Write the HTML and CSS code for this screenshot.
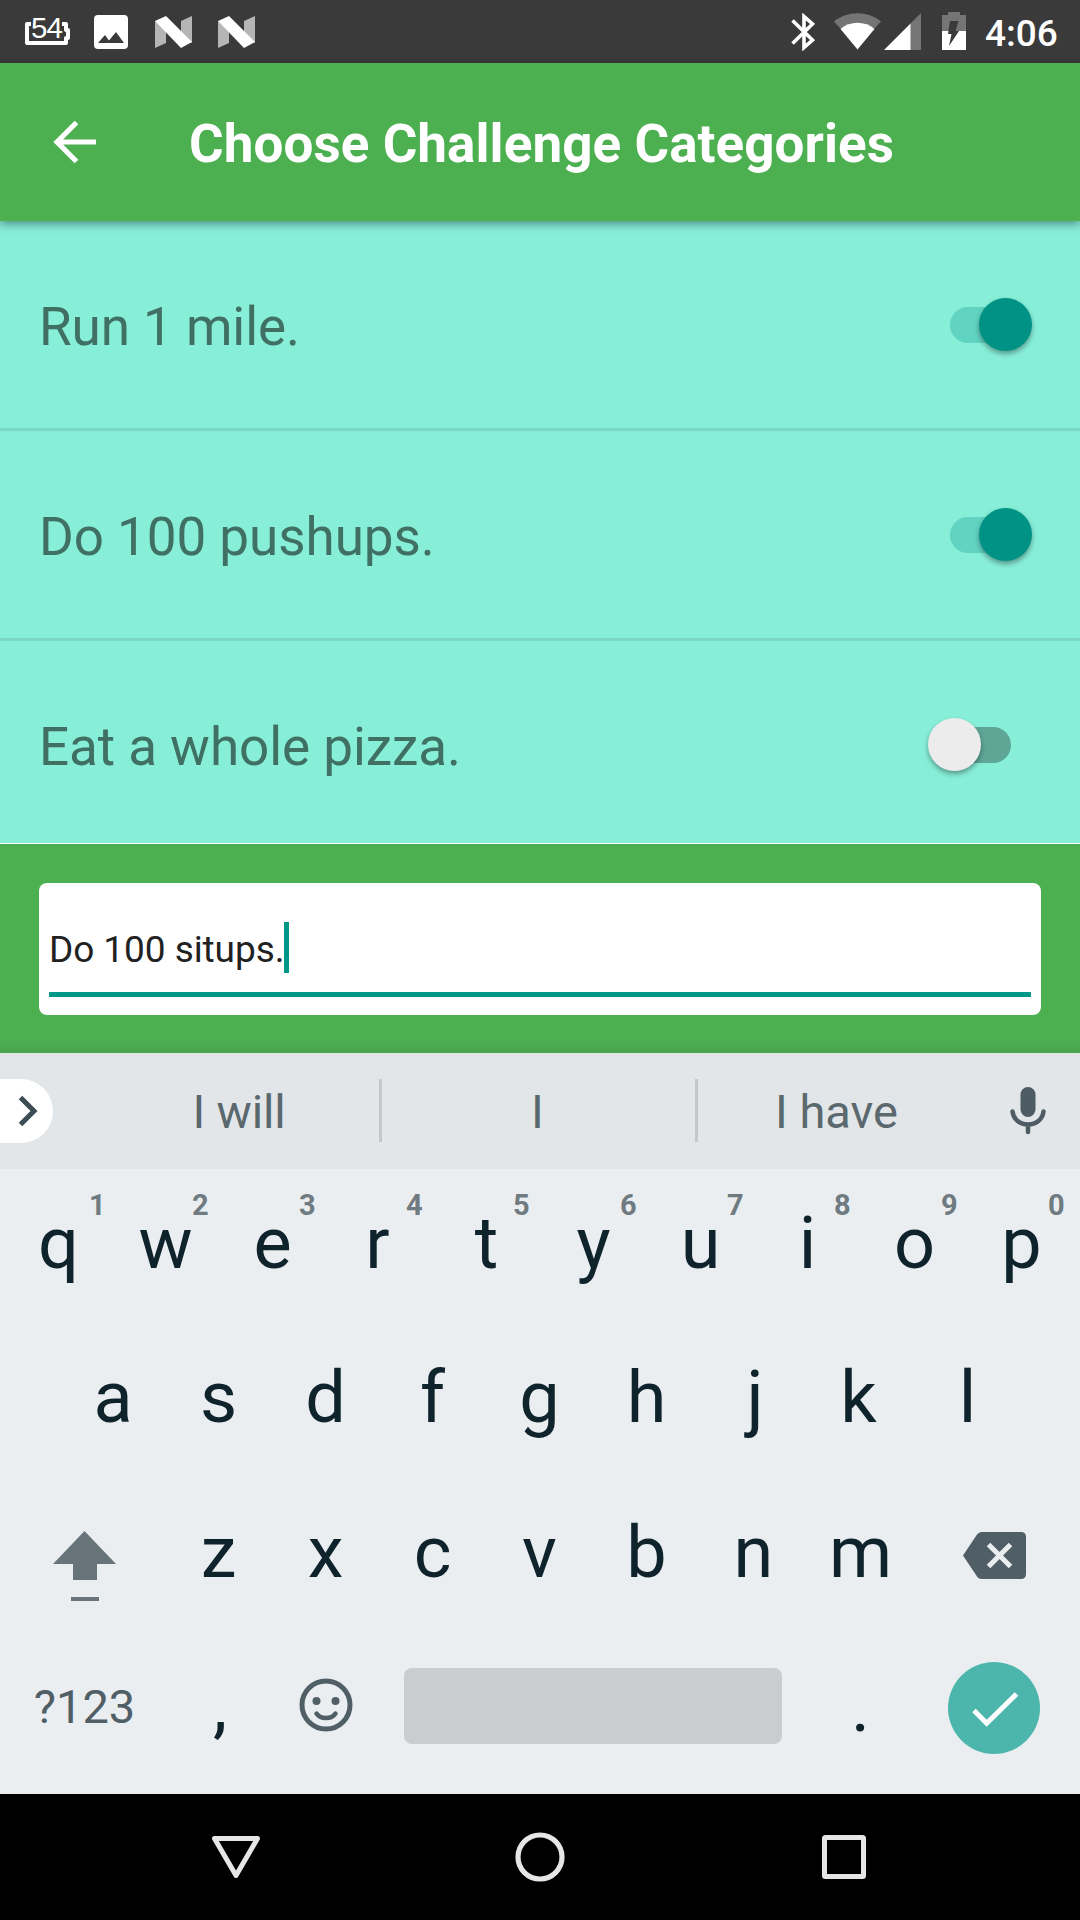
FILE: index.html
```html
<!DOCTYPE html>
<html lang="en">
<head>
<meta charset="utf-8">
<title>Choose Challenge Categories</title>
<link rel="stylesheet" href="styles.css">
</head>
<body>
<div class="screen">
  <header class="status">
    <div class="battery-level">
      <svg width="46" height="24" viewBox="0 0 46 24"><path d="M6 2H2v19h39v-5h2V8h-2V2h-4" fill="none" stroke="#fff" stroke-width="4" stroke-linejoin="round"/></svg>
      <span class="battery-text">54</span>
    </div>
    <svg class="picture" width="34" height="34" viewBox="0 0 34 34"><path fill="#fff" fill-rule="evenodd" d="M4 0h26a4 4 0 0 1 4 4v26a4 4 0 0 1-4 4H4a4 4 0 0 1-4-4V4a4 4 0 0 1 4-4zm0 28h26l-8-11-7 8.500-4-5.500z"/></svg>
    <svg class="nougat" width="39" height="32" viewBox="0 0 39 32"><path fill="#b5b5b5" d="M1 5v27l11-5V12zM27 5l11-5v27l-11-7z"/><path fill="#fff" d="M1 5 12 0l26 26-11 6z"/></svg>
    <svg class="nougat" width="39" height="32" viewBox="0 0 39 32"><path fill="#b5b5b5" d="M1 5v27l11-5V12zM27 5l11-5v27l-11-7z"/><path fill="#fff" d="M1 5 12 0l26 26-11 6z"/></svg>
    <svg class="bluetooth" width="24" height="38" viewBox="0 0 24 38"><path d="m1.500 7.500 20 19.500-8.500 7.500v-31l8.500 7.500-20 19.500" fill="none" stroke="#fff" stroke-width="3.600"/></svg>
    <svg class="wifi" width="47" height="37" viewBox="0 0 47 37"><path fill="#757575" d="M0 8.500C13-2.500 34-2.500 47 8.500L40 16H7z"/><path fill="#fff" d="M6.500 16C16 7.500 31 7.500 40.500 16L23.500 36.500z"/></svg>
    <svg class="signal" width="37" height="37" viewBox="0 0 37 37"><path fill="#757575" d="M37 0v37H26V11z"/><path fill="#fff" d="M26.500 10.500V37H0z"/></svg>
    <svg class="charging" width="24" height="38" viewBox="0 0 24 38"><path fill="#757575" d="M0 3h6V0h12v3h6v17H0z"/><path fill="#fff" d="M0 19h24v19H0z"/><path fill="#3a3a3a" d="M8 9h8.500l-3 10H17L7 34l2.500-12H6z"/></svg>
    <span class="clock">4:06</span>
  </header>

  <div class="appbar">
    <svg width="44" height="44" viewBox="0 0 44 44"><path d="M43 22H4.500M23.500 2.500 4 22l19.500 19.500" fill="none" stroke="#fff" stroke-width="5.200"/></svg>
    <h1>Choose Challenge Categories</h1>
  </div>

  <main class="list">
    <div class="item"><span class="label">Run 1 mile.</span><span class="switch on"><i class="thumb"></i></span></div>
    <div class="item"><span class="label">Do 100 pushups.</span><span class="switch on"><i class="thumb"></i></span></div>
    <div class="item"><span class="label">Eat a whole pizza.</span><span class="switch off"><i class="thumb"></i></span></div>
  </main>

  <section class="entry">
    <div class="field"><div class="line"><span class="typed">Do 100 situps.</span><i class="caret"></i></div></div>
  </section>

  <section class="suggestions">
    <span class="expand"><svg width="20" height="32" viewBox="0 0 20 32"><path d="m2.500 2.500 13.500 13.500L2.500 29.500" fill="none" stroke="#3c4d56" stroke-width="5"/></svg></span>
    <span class="word first">I will</span>
    <span class="word middle">I</span>
    <span class="word last">I have</span>
    <svg class="mic" width="36" height="48" viewBox="0 0 36 48"><rect x="10.500" y="0" width="15" height="30" rx="7.500" fill="#4d5c63"/><path d="M2.500 24.500c1 8 7.500 13 15.500 13s14.500-5 15.500-13M18 38v7" fill="none" stroke="#4d5c63" stroke-width="4.500" stroke-linecap="round"/></svg>
  </section>

  <section class="keyboard">
    <div class="keys top">
      <span>q<b class="one">1</b></span><span>w<b>2</b></span><span>e<b>3</b></span><span class="pull">r<b>4</b></span><span>t<b>5</b></span><span>y<b>6</b></span><span>u<b>7</b></span><span>i<b>8</b></span><span>o<b>9</b></span><span>p<b>0</b></span>
    </div>
    <div class="keys home">
      <span class="push">a</span><span>s</span><span>d</span><span>f</span><span>g</span><span>h</span><span class="push">j</span><span class="pull">k</span><span>l</span>
    </div>
    <div class="keys lower">
      <svg class="shift" width="64" height="71" viewBox="0 0 64 71"><path fill="#67747a" d="M31.500 0 63 33H44v16H20V33H0zM18 66h28v4H18z"/></svg>
      <span>z</span><span>x</span><span>c</span><span>v</span><span>b</span><span>n</span><span>m</span>
      <svg class="delete" width="63" height="48" viewBox="0 0 63 48"><path fill="#505e66" d="M0 23.500 14 2.500Q15.700 0 18.500 0H58q5 0 5 5v37q0 5-5 5H18.500q-2.800 0-4.500-2.500z"/><path d="m25.500 12.500 22 22m0-22-22 22" stroke="#ebeef1" stroke-width="5"/></svg>
    </div>
    <div class="keys bottom">
      <span class="symbols">?123</span>
      <span class="comma">,</span>
      <svg class="emoji" width="54" height="54" viewBox="0 0 54 54"><circle cx="27" cy="27" r="24" fill="none" stroke="#505e66" stroke-width="5"/><circle cx="17.500" cy="23" r="4" fill="#505e66"/><circle cx="36.500" cy="23" r="4" fill="#505e66"/><path d="M17.500 35.500c4 6 15 6 19 0" fill="none" stroke="#505e66" stroke-width="4.500" stroke-linecap="round"/></svg>
      <i class="space"></i>
      <span class="period">.</span>
      <svg class="done" width="92" height="92" viewBox="0 0 92 92"><circle cx="46" cy="46" r="46" fill="#4db6ac"/><path d="m26 48.500 12.700 12.700L68.500 32" fill="none" stroke="#fff" stroke-width="5"/></svg>
    </div>
  </section>

  <nav class="navbar">
    <svg width="50" height="50" viewBox="0 0 50 50"><path d="M3.500 6.500h43L25 43.500z" fill="none" stroke="#e6e6e6" stroke-width="5" stroke-linejoin="round"/></svg>
    <svg width="50" height="50" viewBox="0 0 50 50"><circle cx="25" cy="25" r="22" fill="none" stroke="#e6e6e6" stroke-width="5.200"/></svg>
    <svg width="50" height="50" viewBox="0 0 50 50"><rect x="5.500" y="5.500" width="39" height="39" rx="1" fill="none" stroke="#e6e6e6" stroke-width="5"/></svg>
  </nav>
</div>
</body>
</html>
```
FILE: styles.css
```css
* { box-sizing: border-box; }
body { margin: 0; font-family: Roboto, sans-serif; background: #000; }
svg { display: block; flex: none; }
.screen { width: 1080px; height: 1920px; display: flex; flex-direction: column; overflow: hidden; }
.screen > * { flex: none; }

.status { height: 63px; background: #3a3a3a; display: flex; align-items: flex-start; padding-left: 25px; color: #fff; }
.battery-level { position: relative; margin-top: 22px; }
.battery-text { position: absolute; left: 6px; top: -11px; font-family: "Liberation Sans", sans-serif; font-size: 29.5px; line-height: 34px; letter-spacing: -1px; background: #3a3a3a; height: 29px; }
.picture { margin: 15px 0 0 23px; }
.nougat { margin: 16px 0 0 26px; }
.nougat + .nougat { margin-left: 24px; }
.bluetooth { margin: 13px 0 0 535px; }
.wifi { margin: 13px 0 0 19px; }
.signal { margin: 13px 0 0 3px; }
.charging { margin: 12px 0 0 21px; }
.clock { margin-left: 19px; font-size: 37px; line-height: 67px; font-weight: 500; }

.appbar { position: relative; z-index: 1; height: 158px; background: #4caf50; display: flex; align-items: center; padding-left: 53px; box-shadow: 0 3px 9px rgba(0,0,0,.4); }
.appbar h1 { margin: 0 0 0 92px; color: #fff; font-size: 53px; line-height: 158px; font-weight: 700; letter-spacing: .06px; white-space: nowrap; padding-top: 3px; }

.list { height: 623px; background: #87eed8; border-bottom: 1px solid #fff; }
.item { height: 210px; display: flex; align-items: flex-start; justify-content: space-between; border-bottom: 3px solid #7ad7c3; padding-left: 39px; }
.item:last-child { height: 202px; border: 0; }
.label { color: #407063; font-size: 53px; line-height: 212px; letter-spacing: -.05px; white-space: nowrap; }
.switch { position: relative; width: 61px; height: 36px; margin: 86px 69.5px 0 0; border-radius: 18px; }
.on { background: #60d3c1; }
.off { background: #5fa697; }
.thumb { position: absolute; top: -9px; width: 53px; height: 53px; border-radius: 50%; box-shadow: 0 3px 5px rgba(0,0,0,.35); }
.on .thumb { left: 29.5px; background: #009385; }
.off .thumb { left: -21.5px; background: #ececec; }

.entry { height: 209px; background: linear-gradient(#4caf50 196px, #4aa44d); padding: 39px; }
.field { height: 132px; border-radius: 8px; background: #fff; padding: 0 10px; }
.line { height: 114px; border-bottom: 5px solid #009688; display: flex; align-items: flex-start; color: #212121; }
.typed { font-size: 37px; line-height: 134px; letter-spacing: -.07px; white-space: nowrap; }
.caret { width: 5px; height: 51px; margin-top: 39px; background: #009688; }

.suggestions { height: 116px; background: #e2e6e9; display: flex; align-items: center; padding-bottom: 1px; color: #5b686e; font-size: 47px; }
.expand { width: 53px; height: 64px; border-radius: 0 32px 32px 0; background: #fff; padding: 16px 0 0 17.5px; }
.word { height: 63px; line-height: 66px; text-align: center; white-space: nowrap; }
.first { width: 329px; padding-left: 46px; letter-spacing: -.2px; border-right: 3px solid #c3c8cb; }
.middle { width: 316px; padding-right: 2px; border-right: 3px solid #c3c8cb; }
.last { width: 280px; padding-right: 3px; }
.mic { margin-left: 32px; }

.keyboard { height: 625px; background: #ebeef1; color: #0e232b; font-size: 72px; }
.keys { height: 154.33px; line-height: 149px; display: flex; align-items: flex-start; }
.keys span { width: 107px; text-align: center; flex: none; position: relative; }
.keys b { position: absolute; left: 80px; top: 20px; font-size: 29px; line-height: 32px; color: #6f7b80; font-weight: 700; }
.keys .one { left: 84px; }
.keys .push { padding-left: 3px; }
.keys .pull { padding-right: 4px; }
.top { padding-left: 5px; }
.home { padding-left: 58px; }
.lower { padding-left: 53px; }
.shift { margin: 53px 48px 0 0; }
.delete { margin: 54px 0 0 49px; }
.bottom { padding-left: 31px; }
.keys .symbols { font-size: 47px; width: 107px; margin-right: 27px; color: #505e66; line-height: 150px; }
.keys .comma { padding-left: 3px; line-height: 147px; }
.emoji { margin: 46px 0 0 27px; }
.space { width: 378px; height: 76px; border-radius: 8px; background: #c9cdd0; margin: 36px 0 0 51px; }
.keys .period { margin-left: 25px; }
.done { margin: 30px 0 0 34px; }

.navbar { height: 126px; background: #000; display: flex; justify-content: space-between; align-items: center; padding: 0 211px; }
```
